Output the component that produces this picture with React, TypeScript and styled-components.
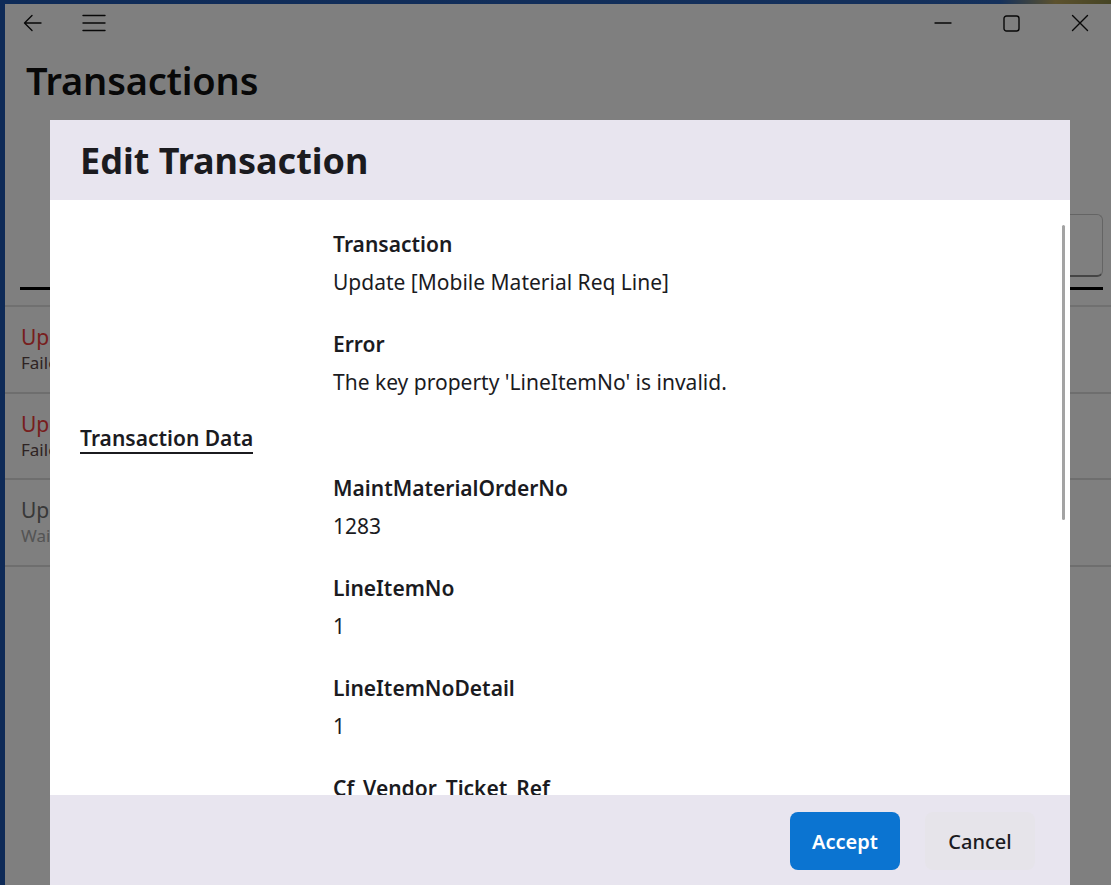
import React from "react";
import styled, { createGlobalStyle } from "styled-components";

const Global = createGlobalStyle`
  html, body { margin: 0; padding: 0; height: 100%; }
  body {
    background: linear-gradient(90deg, #1d56b0 0%, #2a62b8 90%, #b9a45c 95%, #8c8a4a 100%);
    font-family: "Noto Sans", "Open Sans", sans-serif;
    overflow: hidden;
  }
  #root { height: 100%; }
`;

const Desktop = styled.div`
  height: 100vh;
  box-sizing: border-box;
  padding: 4px 0 0 5px;
  background: linear-gradient(180deg, transparent 0, transparent 4px, #1c55ae 4px);
  position: relative;
`;

const AppWindow = styled.div`
  height: 100%;
  background: #fefefe;
  display: flex;
  flex-direction: column;
`;

const TitleBar = styled.div`
  height: 38px;
  display: flex;
  align-items: center;
  padding: 0 0 0 16px;
`;

const IconBtn = styled.div<{ $w?: number }>`
  width: ${(p) => p.$w ?? 40}px;
  height: 38px;
  display: flex;
  align-items: center;
  justify-content: center;
  color: #111;
`;

const Spacer = styled.div`
  flex: 1;
`;

const PageTitle = styled.h1`
  margin: 0;
  height: 78px;
  box-sizing: border-box;
  padding: 13px 0 0 21px;
  font-size: 38px;
  line-height: 50px;
  font-weight: 600;
  color: #111;
  letter-spacing: -0.2px;
`;

const Toolbar = styled.div`
  height: 185px;
  flex: none;
  display: flex;
  flex-direction: column;
  justify-content: flex-end;
  padding: 0 8px 0 15px;
  border-bottom: 2px solid #e0e0e0;
`;

const ToolRow = styled.div`
  display: flex;
  justify-content: flex-end;
  margin-bottom: 10px;
`;

const SearchBox = styled.div`
  width: 280px;
  height: 60px;
  border: 1px solid #c9c9c9;
  border-bottom: 2px solid #8a8a8a;
  border-radius: 6px;
`;

const TabLine = styled.div`
  height: 3px;
  background: #000;
  margin-bottom: 15px;
`;

const ListRow = styled.div`
  height: 86.5px;
  flex: none;
  border-bottom: 2px solid #dcdcdc;
  padding: 17px 16px 0 16px;
  box-sizing: border-box;
`;

const RowTitle = styled.div<{ $c: string }>`
  font-size: 21px;
  line-height: 27px;
  color: ${(p) => p.$c};
`;

const RowSub = styled.div<{ $c: string }>`
  font-size: 17px;
  line-height: 24px;
  color: ${(p) => p.$c};
`;

const Overlay = styled.div`
  position: fixed;
  inset: 0;
  background: rgba(0, 0, 0, 0.5);
`;

const Dialog = styled.div`
  position: fixed;
  left: 50px;
  top: 120px;
  width: 1020px;
  bottom: 0;
  background: #fff;
  display: flex;
  flex-direction: column;
`;

const DialogHeader = styled.div`
  height: 80px;
  flex: none;
  background: #e8e5ef;
  display: flex;
  align-items: center;
  padding: 0 30px;
`;

const DialogTitle = styled.h2`
  margin: 0;
  font-size: 36px;
  font-weight: 700;
  color: #1b1b1f;
  line-height: 46px;
  padding-top: 1px;
`;

const DialogBody = styled.div`
  flex: 1;
  overflow: hidden;
  position: relative;
  padding: 30px 30px 0 30px;
`;

const Grid = styled.div`
  display: grid;
  grid-template-columns: 253px 1fr;
`;

const Fields = styled.div`
  grid-column: 2;
  display: flex;
  flex-direction: column;
  gap: 34px;
`;

const Field = styled.div`
  display: flex;
  flex-direction: column;
  gap: 10px;
`;

const Label = styled.div`
  font-size: 21px;
  line-height: 28px;
  font-weight: 600;
  color: #1b1b1f;
`;

const Value = styled.div`
  font-size: 21px;
  line-height: 28px;
  color: #1b1b1f;
`;

const SectionHead = styled.div`
  grid-column: 1 / -1;
  margin: 29px 0 20px;
  justify-self: start;
  font-size: 21px;
  line-height: 27px;
  font-weight: 600;
  color: #1b1b1f;
  border-bottom: 2px solid #1b1b1f;
`;

const Scrollbar = styled.div`
  position: absolute;
  right: 5px;
  top: 25px;
  width: 3px;
  height: 295px;
  border-radius: 2px;
  background: #a3a3a3;
`;

const DialogFooter = styled.div`
  height: 90px;
  flex: none;
  background: #e8e5ef;
  display: flex;
  justify-content: flex-end;
  align-items: flex-start;
  gap: 25px;
  padding: 17px 35px 0 0;
  box-sizing: border-box;
`;

const Button = styled.button<{ $primary?: boolean }>`
  width: 110px;
  height: 58px;
  border: none;
  border-radius: 8px;
  font-family: "Noto Sans", "Open Sans", sans-serif;
  font-size: 20px;
  font-weight: ${(p) => (p.$primary ? 600 : 500)};
  background: ${(p) => (p.$primary ? "#0b74d1" : "#e6e4ea")};
  color: ${(p) => (p.$primary ? "#fff" : "#1b1b1f")};
`;

const sw = { fill: "none", stroke: "currentColor", strokeWidth: 1.4, strokeLinecap: "round" as const, strokeLinejoin: "round" as const };

const fields1 = [
  { l: "Transaction", v: "Update [Mobile Material Req Line]" },
  { l: "Error", v: "The key property 'LineItemNo' is invalid." },
];
const fields2 = [
  { l: "MaintMaterialOrderNo", v: "1283" },
  { l: "LineItemNo", v: "1" },
  { l: "LineItemNoDetail", v: "1" },
  { l: "Cf_Vendor_Ticket_Ref", v: "" },
  { l: "PartNo", v: "" },
];

export default function App() {
  return (
    <>
      <Global />
      <Desktop>
        <AppWindow>
          <TitleBar>
            <IconBtn $w={24}>
              <svg width="20" height="18" viewBox="0 0 20 18" {...sw}>
                <path d="M18 9H2M9 1.5L1.5 9L9 16.5" />
              </svg>
            </IconBtn>
            <IconBtn $w={98}>
              <svg width="24" height="18" viewBox="0 0 24 18" {...sw}>
                <path d="M1 1.5H23M1 9H23M1 16.5H23" />
              </svg>
            </IconBtn>
            <Spacer />
            <IconBtn $w={60}>
              <svg width="18" height="4" viewBox="0 0 18 4" {...sw}>
                <path d="M1 2H17" />
              </svg>
            </IconBtn>
            <IconBtn $w={76}>
              <svg width="17" height="17" viewBox="0 0 17 17" {...sw}>
                <rect x="1" y="1" width="15" height="15" rx="2.5" />
              </svg>
            </IconBtn>
            <IconBtn $w={62}>
              <svg width="18" height="18" viewBox="0 0 18 18" {...sw}>
                <path d="M1.5 1.5L16.5 16.5M16.5 1.5L1.5 16.5" />
              </svg>
            </IconBtn>
          </TitleBar>
          <PageTitle>Transactions</PageTitle>
          <Toolbar>
            <ToolRow>
              <SearchBox />
            </ToolRow>
            <TabLine />
          </Toolbar>
          <ListRow>
            <RowTitle $c="#ef3c3c">Update [Mobile Material Req Line]</RowTitle>
            <RowSub $c="#5c4646">Failed</RowSub>
          </ListRow>
          <ListRow>
            <RowTitle $c="#ef3c3c">Update [Mobile Material Req Line]</RowTitle>
            <RowSub $c="#5c4646">Failed</RowSub>
          </ListRow>
          <ListRow>
            <RowTitle $c="#707070">Update [Mobile Material Req Line]</RowTitle>
            <RowSub $c="#a8a8a8">Waiting</RowSub>
          </ListRow>
        </AppWindow>
        <Overlay />
        <Dialog>
          <DialogHeader>
            <DialogTitle>Edit Transaction</DialogTitle>
          </DialogHeader>
          <DialogBody>
            <Grid>
              <Fields>
                {fields1.map((f) => (
                  <Field key={f.l}>
                    <Label>{f.l}</Label>
                    <Value>{f.v}</Value>
                  </Field>
                ))}
              </Fields>
              <SectionHead>Transaction Data</SectionHead>
              <Fields>
                {fields2.map((f) => (
                  <Field key={f.l}>
                    <Label>{f.l}</Label>
                    <Value>{f.v || "\u00a0"}</Value>
                  </Field>
                ))}
              </Fields>
            </Grid>
            <Scrollbar />
          </DialogBody>
          <DialogFooter>
            <Button $primary>Accept</Button>
            <Button>Cancel</Button>
          </DialogFooter>
        </Dialog>
      </Desktop>
    </>
  );
}
